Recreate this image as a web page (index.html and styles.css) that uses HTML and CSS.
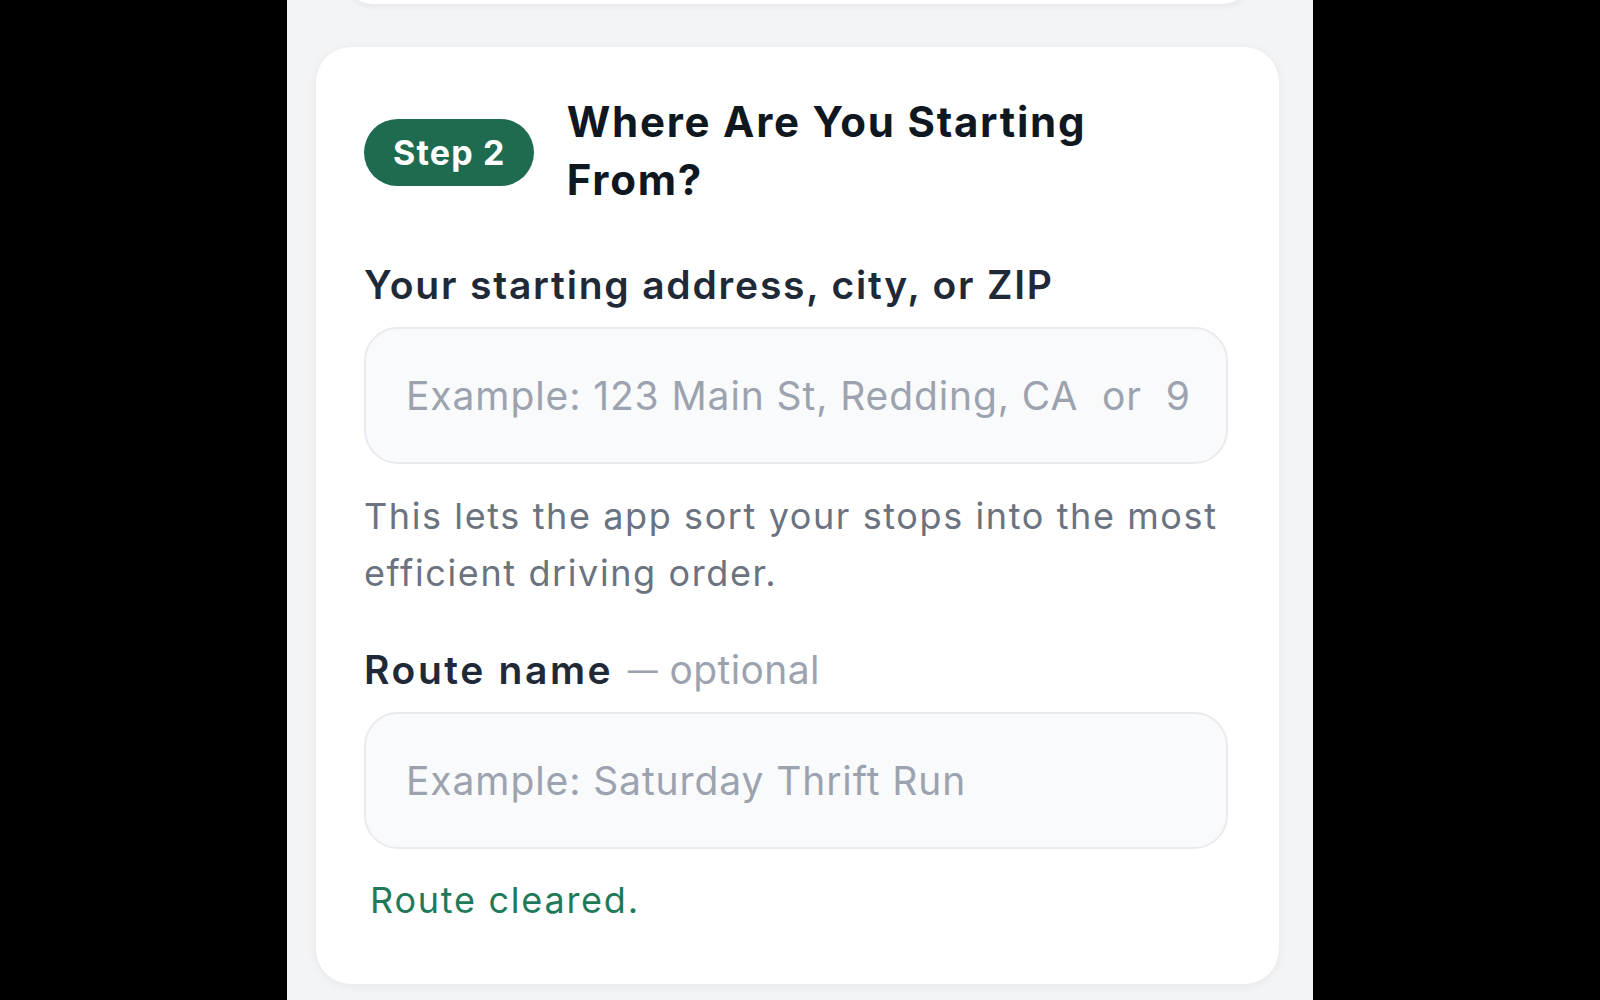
FILE: index.html
```html
<!DOCTYPE html>
<html lang="en">
<head>
<meta charset="utf-8">
<title>Where Are You Starting From?</title>
<link rel="stylesheet" href="styles.css">
</head>
<body>
<div class="panel">
  <div class="prev-card"></div>
  <section class="card">
    <header class="card-head">
      <span class="badge">Step 2</span>
      <h2 class="title">Where Are You Starting From?</h2>
    </header>
    <label class="label" for="start">Your starting address, city, or ZIP</label>
    <input class="field" id="start" type="text" placeholder="Example: 123 Main St, Redding, CA  or  96001">
    <p class="help">This lets the app sort your stops into the most efficient driving order.</p>
    <label class="label label-route" for="route">Route name <span class="optional"><span class="dash">—</span> optional</span></label>
    <input class="field" id="route" type="text" placeholder="Example: Saturday Thrift Run">
    <p class="status">Route cleared.</p>
  </section>
</div>
</body>
</html>
```

FILE: styles.css
```css
* { box-sizing: border-box; }

html, body {
  margin: 0;
  padding: 0;
  height: 100%;
}

body {
  background: #000;
  font-family: Inter, "DejaVu Sans", sans-serif;
  overflow: hidden;
}

.panel {
  width: 1026px;
  height: 1000px;
  margin: 0 auto;
  background: #f3f4f6;
  padding: 0 33px 0 28px;
  overflow: hidden;
}

.prev-card {
  height: 60px;
  margin: -56px 25px 0 25px;
  background: #fff;
  border-radius: 0 0 34px 34px;
  box-shadow: 0 2px 6px rgba(15, 23, 42, 0.07);
}

.card {
  margin-top: 42px;
  height: 939px;
  background: #fff;
  border: 1px solid #eceef1;
  border-radius: 36px;
  box-shadow: 0 2px 8px rgba(15, 23, 42, 0.05);
  padding: 46px 51px 0 48px;
}

.card-head {
  display: flex;
  align-items: center;
  gap: 33px;
}

.badge {
  flex: none;
  display: inline-flex;
  align-items: center;
  justify-content: center;
  height: 67px;
  margin-top: 2px;
  padding: 0 28px 0 29px;
  border-radius: 34px;
  background: #1e6b4f;
  color: #fff;
  font-weight: 700;
  font-size: 34px;
  letter-spacing: 1.2px;
}

.title {
  margin: 0;
  font-size: 42px;
  line-height: 58px;
  font-weight: 700;
  letter-spacing: 1.75px;
  color: #0f1720;
  max-width: 580px;
}

.label {
  display: block;
  margin-top: 51px;
  font-size: 39px;
  line-height: 50px;
  font-weight: 600;
  letter-spacing: 1.8px;
  color: #1f2937;
}

.label-route {
  margin-top: 43px;
  height: 50px;
  letter-spacing: 2.6px;
}

.optional {
  font-weight: 400;
  letter-spacing: 0.4px;
  color: #9ca3af;
}

.dash {
  display: inline-block;
  margin-left: 2px;
  font-size: 30px;
  line-height: 1;
  transform: translateY(-3px);
}

.field {
  display: block;
  width: 100%;
  height: 137px;
  margin-top: 17px;
  padding: 0 34px 0 40px;
  border: 2px solid #e8eaee;
  border-radius: 34px;
  background: #f9fafb;
  font-family: inherit;
  font-size: 39px;
  letter-spacing: 0.9px;
  color: #111827;
  outline: none;
}

.field::placeholder {
  color: #9ca3af;
}

.help {
  margin: 24px 0 0;
  font-size: 36px;
  line-height: 57px;
  letter-spacing: 1.6px;
  color: #6b7280;
}

.status {
  margin: 26px 0 0 6px;
  font-size: 36px;
  line-height: 50px;
  letter-spacing: 1.75px;
  color: #1f7a5a;
}
```
